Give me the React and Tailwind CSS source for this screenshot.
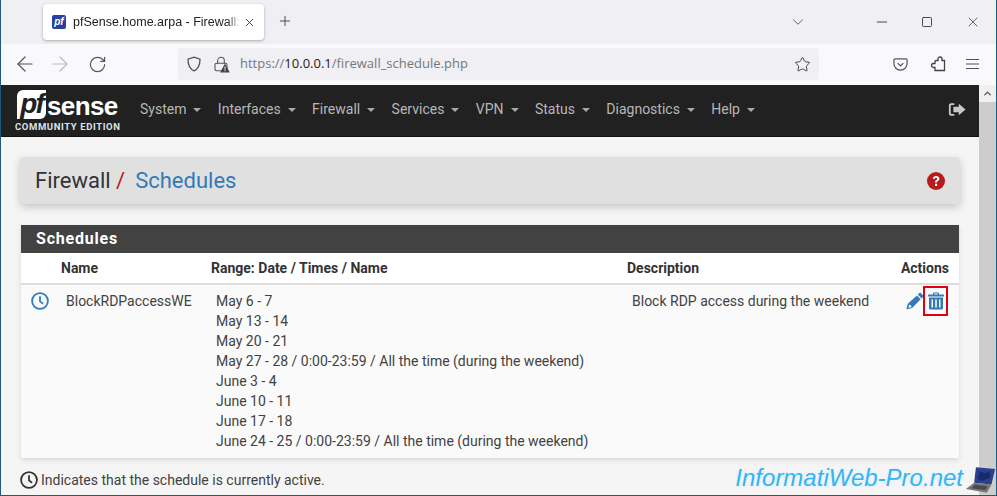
import React from 'react';
import { ArrowLeft, ArrowRight, RotateCw, Star, X, Plus, ChevronDown, Minus, Square, Lock, ChevronUp } from 'lucide-react';

const menus = ['System', 'Interfaces', 'Firewall', 'Services', 'VPN', 'Status', 'Diagnostics', 'Help'];
const ranges = [
    'May 6 - 7',
    'May 13 - 14',
    'May 20 - 21',
    'May 27 - 28 / 0:00-23:59 / All the time (during the weekend)',
    'June 3 - 4',
    'June 10 - 11',
    'June 17 - 18',
    'June 24 - 25 / 0:00-23:59 / All the time (during the weekend)',
];

const Clock = ({ className }) => (
    <svg viewBox="0 0 20 20" className={className} fill="none" stroke="currentColor">
        <circle cx="10" cy="10" r="8.8" strokeWidth="2" />
        <path d="M10 4.800v5.600l3.400 2.600" strokeWidth="2" />
    </svg>
);

const Caret = () => <span className="ml-[7px] inline-block border-x-[4px] border-t-[4px] border-x-transparent border-t-[#a8a8a8] align-middle" />;

const App = () => {
    return (
        <div className="relative flex h-[496px] w-[997px] flex-col overflow-hidden border-x border-b border-[#1d5b7e] font-['Roboto',sans-serif] text-[14px] text-[#333]">
            {/* browser tab strip */}
            <div className="flex h-[44px] shrink-0 items-start bg-[#f0f0f4] pl-[42px] pt-[4px]">
                <div className="flex h-[36px] w-[221px] items-center rounded-[4px] bg-white pl-[9px] pr-[11px] shadow-[0_1px_3px_rgba(0,0,0,0.3)] font-['Liberation_Sans',sans-serif]">
                    <div className="flex h-[14px] w-[14px] shrink-0 items-center justify-center rounded-[2px] bg-[#2a3f9e] text-[10px] font-bold italic leading-none text-white">pf</div>
                    <span className="ml-[7px] w-[170px] shrink-0 whitespace-nowrap text-[12.5px] text-[#222] [mask-image:linear-gradient(to_right,black_154px,transparent_168px)]">pfSense.home.arpa - Firewall: Sc</span>
                    <X className="ml-auto h-[13px] w-[13px] shrink-0 text-[#222]" strokeWidth={1.5} />
                </div>
                <Plus className="ml-[13px] mt-[9px] h-[16px] w-[16px] text-[#444]" strokeWidth={1.4} />
                <ChevronDown className="ml-[496px] mt-[9px] h-[18px] w-[18px] text-[#555]" strokeWidth={1.2} />
                <Minus className="ml-[67px] mt-[10px] h-[16px] w-[16px] text-[#222]" strokeWidth={1.2} />
                <Square className="ml-[31px] mt-[12px] h-[12px] w-[12px] text-[#222]" strokeWidth={1.6} />
                <X className="ml-[32px] mt-[10px] h-[16px] w-[16px] text-[#222]" strokeWidth={1} />
            </div>

            {/* browser toolbar */}
            <div className="flex h-[41px] shrink-0 items-center bg-[#f9f9fb] pb-[1px] pl-[12px]">
                <ArrowLeft className="h-[24px] w-[24px] text-[#555]" strokeWidth={1.2} />
                <ArrowRight className="ml-[11px] h-[24px] w-[24px] text-[#bbb]" strokeWidth={1.2} />
                <RotateCw className="ml-[16px] h-[19px] w-[19px] text-[#555]" strokeWidth={1.5} />
                <div className="ml-[71px] flex h-[32px] w-[641px] shrink-0 items-center rounded-[4px] bg-[#f0f0f4] pl-[8px] font-['Open_Sans',sans-serif] text-[13px]">
                    <svg viewBox="0 0 16 16" className="h-[16px] w-[16px] text-[#555]" fill="none" stroke="currentColor" strokeWidth="1.3"><path d="M8 1.200L14 3.200C14 9 12.500 12.800 8 14.800 3.500 12.800 2 9 2 3.200z" /></svg>
                    <div className="relative ml-[11px] h-[17px] w-[17px]">
                        <Lock className="h-[16px] w-[16px] text-[#555]" strokeWidth={1.6} />
                        <svg viewBox="0 0 10 10" className="absolute bottom-0 right-0 h-[10px] w-[10px]"><path d="M5 0.5L9.8 9.5H0.2Z" fill="#444" /><rect x="4.5" y="3.5" width="1" height="3" fill="#fff" /><rect x="4.5" y="7.2" width="1" height="1" fill="#fff" /></svg>
                    </div>
                    <span className="ml-[10px] whitespace-nowrap text-[#777]">https://<span className="text-[#222]">10.0.0.1</span>/firewall_schedule.php</span>
                    <Star className="ml-auto mr-[8px] h-[17px] w-[17px] text-[#444]" strokeWidth={1.4} />
                </div>
                <svg viewBox="0 0 16 16" className="ml-[74px] h-[15px] w-[15px] text-[#555]" fill="none" stroke="currentColor" strokeWidth="1.3"><path d="M2.200 2h11.600c.7 0 1.200.5 1.200 1.200V7c0 4-3.100 7-7 7s-7-3-7-7V3.200c0-.7.5-1.200 1.200-1.200z" /><path d="M5 6.500l3 3 3-3" /></svg>
                <svg viewBox="0 0 16 16" className="ml-[22px] h-[16px] w-[16px] text-[#444]" fill="none" stroke="currentColor" strokeWidth="1.3"><path d="M6 4.500H8V3a2 2 0 0 1 4 0v1.500h2.500v10H5V11.500H3.500a2 2 0 0 1 0-4H5V5.500c0-.6.4-1 1-1z" /></svg>
                <svg viewBox="0 0 13 12" className="ml-[20px] h-[12px] w-[13px] text-[#555]" fill="none" stroke="currentColor" strokeWidth="1.100"><path d="M0 1.500h13M0 6h13M0 10.500h13" /></svg>
            </div>

            {/* page + scrollbar */}
            <div className="flex min-h-0 flex-1">
                <div className="flex min-w-0 flex-1 flex-col bg-[#f5f5f5]">
                    <nav className="flex h-[52px] shrink-0 items-center border-b border-[#101010] bg-[#212121] pl-[14px]">
                        <div className="w-[110px] shrink-0">
                            <div className="ml-[2px] flex h-[29px] items-center">
                                <div className="flex h-[29px] w-[29px] items-center justify-center rounded-tl-[6px] rounded-br-[6px] bg-white font-['Liberation_Sans',sans-serif] text-[28px] font-bold italic leading-none tracking-[-2px] text-[#212121]">pf</div>
                                <span className="ml-[1px] mt-[3px] font-['Liberation_Sans',sans-serif] text-[26px] font-bold leading-none tracking-[-0.6px] text-white">sense</span>
                            </div>
                            <div className="mt-[2px] whitespace-nowrap text-[9.5px] font-bold leading-[11px] tracking-[0.6px] text-[#dce4ea]">COMMUNITY EDITION</div>
                        </div>
                        <div className="ml-[15px] -mt-[3px] flex gap-[16.4px]">
                            {menus.map((m) => (
                                <span key={m} className="whitespace-nowrap text-[14px] text-[#b7b7b7]">{m}<Caret /></span>
                            ))}
                        </div>
                        <svg viewBox="0 0 20 16" className="ml-auto mr-[13px] -mt-[3px] h-[15px] w-[18px] text-[#c8c8c8]" fill="currentColor"><path d="M1 3.500C1 2 2 1 3.500 1H7v2H4C3.400 3 3 3.400 3 4v8c0 .6.4 1 1 1h3v2H3.500C2 15 1 14 1 12.500z" /><path d="M12 1.500L19.500 8 12 14.500V11H6V5h6z" /></svg>
                    </nav>

                    <div className="flex min-h-0 flex-1 flex-col px-[19px]">
                        <div className="mt-[20px] flex h-[47px] shrink-0 items-center justify-between rounded-[4px] bg-[#e0e0e0] pl-[15px] pr-[15px] shadow-[0_3px_8px_rgba(0,0,0,0.2)]">
                            <div className="text-[22px] leading-none text-[#333]">Firewall <span className="text-[#b71c1c]">/</span><span className="ml-[10px] text-[#337ab7]">Schedules</span></div>
                            <svg viewBox="0 0 18 18" className="mt-[1px] h-[18px] w-[18px]"><circle cx="9" cy="9" r="9" fill="#b71c1c" /><path d="M5.800 6.800C5.900 5 7.200 3.900 9.100 3.900c1.900 0 3.300 1.100 3.300 2.800 0 1.300-.8 1.900-1.500 2.400-.7.500-.9.800-.9 1.500H8c0-1.400.4-2 1.200-2.600.6-.4 1-.7 1-1.300 0-.6-.5-1-1.100-1-.7 0-1.200.5-1.300 1.100z M8 11.800h2.100v2.100H8z" fill="#fff" /></svg>
                        </div>

                        <div className="mx-[1px] mt-[21px] shrink-0 bg-[#fafafa] shadow-[0_2px_5px_rgba(0,0,0,0.12)]">
                            <div className="flex h-[28px] items-center bg-[#424242] pl-[15px] text-[16px] font-bold tracking-[0.8px] text-white">Schedules</div>
                            <div className="flex h-[32px] items-center border-b-[2px] border-[#ddd] bg-white text-[14px] font-bold text-[#333]">
                                <span className="ml-[40px] w-[150px]">Name</span>
                                <span className="w-[416px]">Range: Date / Times / Name</span>
                                <span>Description</span>
                                <span className="ml-auto mr-[10px]">Actions</span>
                            </div>
                            <div className="flex h-[173px] items-start text-[14px] leading-[20px] text-[#424242]">
                                <Clock className="ml-[10px] mt-[7px] h-[18px] w-[18px] shrink-0 text-[#337ab7]" />
                                <span className="ml-[17px] mt-[6px] w-[150px] shrink-0">BlockRDPaccessWE</span>
                                <div className="mt-[6px] w-[416px] shrink-0">
                                    {ranges.map((r) => (
                                        <div key={r} className="whitespace-nowrap">{r}</div>
                                    ))}
                                </div>
                                <span className="mt-[6px] whitespace-nowrap">Block RDP access during the weekend</span>
                                <div className="ml-auto mr-[11px] mt-[1px] flex items-start">
                                    <svg viewBox="0 0 18 18" className="-mr-[1px] mt-[6px] h-[18px] w-[18px] text-[#337ab7]" fill="currentColor"><path d="M13.200 1.200c.5-.5 1.300-.5 1.800 0l2 2c.5.500.5 1.300 0 1.800l-1.400 1.400-3.800-3.800zM10.900 3.500l3.800 3.800-8.600 8.600-4.900 1.400c-.5.100-.8-.2-.7-.7l1.300-4.900zM3.300 12.700l-.9 3.200 3.200-.9c0-1.200-1.100-2.300-2.300-2.300z" /></svg>
                                    <div className="flex h-[30px] w-[25px] items-center justify-center border-[2px] border-[#e3000f]">
                                        <svg viewBox="0 0 16 17" className="h-[18px] w-[16px] text-[#337ab7]" fill="currentColor"><path d="M5 1.200C5 .5 5.500 0 6.200 0h3.600C10.500 0 11 .5 11 1.200V2h4.500c.3 0 .5.200.5.500V4H0V2.500c0-.3.2-.5.5-.5H5zM6.200 1v1h3.600V1z" /><path d="M1 5h14v10.500c0 .8-.7 1.500-1.500 1.500h-11C1.700 17 1 16.300 1 15.500zM3.500 7v8h1.500V7zM7.200 7v8h1.600V7zM11 7v8h1.500V7z" fillRule="evenodd" /></svg>
                                    </div>
                                </div>
                            </div>
                        </div>

                        <div className="mt-[12px] flex items-center text-[14px] text-[#424242]">
                            <Clock className="-mt-[2px] h-[18px] w-[18px] shrink-0 text-[#333]" />
                            <span className="ml-[3px] whitespace-nowrap">Indicates that the schedule is currently active.</span>
                        </div>
                    </div>
                </div>

                {/* scrollbar */}
                <div className="flex w-[17px] shrink-0 flex-col bg-[#f0f0f0]">
                    <div className="flex h-[17px] items-center justify-center">
                        <ChevronUp className="h-[11px] w-[11px] text-[#555]" strokeWidth={3} />
                    </div>
                    <div className="flex-1 bg-[#cdcdcd]" />
                </div>
            </div>

            {/* watermark over the page */}
            <div className="absolute bottom-[0px] right-[0px] flex items-end">
                <span className="mb-[4px] font-['Liberation_Sans',sans-serif] text-[24px] italic leading-[26px] text-[#35b4f4] [text-shadow:0_0_3px_#d8f2ff]">InformatiWeb-Pro.net</span>
                <svg viewBox="0 0 34 30" className="ml-[2px] h-[30px] w-[31px]">
                    <path d="M12 1L33 3 29 20 10 18z" fill="#27408f" />
                    <path d="M16 5l5 3 6-3 1 7-9 4-5-2z" fill="#1a2a6a" />
                    <path d="M10 18L29 20 24 29 1 25z" fill="#777" />
                    <path d="M11 20l14 2-3 4-15-2z" fill="#4a4a4a" />
                </svg>
            </div>
        </div>
    );
};

export default App;
